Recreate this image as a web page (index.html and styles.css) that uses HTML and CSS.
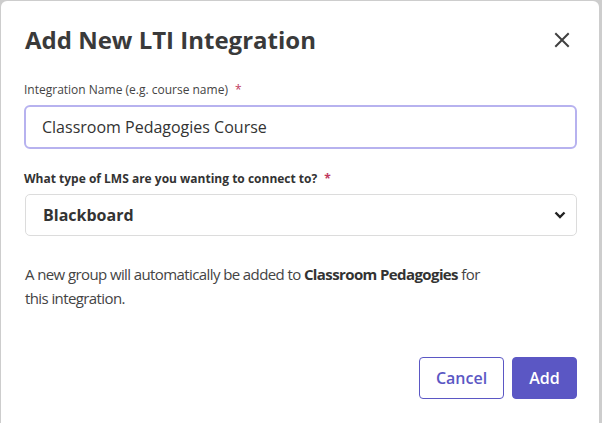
FILE: index.html
```html
<!DOCTYPE html>
<html lang="en">
<head>
<meta charset="utf-8">
<title>Add New LTI Integration</title>
<link rel="stylesheet" href="styles.css">
</head>
<body>
<div class="modal" role="dialog" aria-labelledby="modal-title">
  <header class="modal-header">
    <h1 id="modal-title" class="modal-title">Add New LTI Integration</h1>
    <button class="close-btn" aria-label="Close">
      <svg width="16" height="16" viewBox="0 0 16 16" aria-hidden="true"><path d="M2 2 L14 14 M14 2 L2 14" stroke="#404040" stroke-width="2" stroke-linecap="square" fill="none"/></svg>
    </button>
  </header>
  <div class="modal-body">
    <div class="field">
      <label class="label" for="name">Integration Name (e.g. course name) <span class="req">*</span></label>
      <input id="name" class="text-input" type="text" value="Classroom Pedagogies Course">
    </div>
    <div class="field field-lms">
      <label class="label label-bold" for="lms">What type of LMS are you wanting to connect to? <span class="req">*</span></label>
      <div class="select">
        <span class="select-value">Blackboard</span>
        <svg class="chevron" width="12" height="8" viewBox="0 0 12 8" aria-hidden="true"><path d="M1.5 1.5 L6 6 L10.5 1.5" stroke="#222" stroke-width="2.4" fill="none"/></svg>
      </div>
    </div>
    <p class="note">A new group will automatically be added to <strong>Classroom Pedagogies</strong> for this integration.</p>
  </div>
  <footer class="modal-footer">
    <button class="btn btn-outline">Cancel</button>
    <button class="btn btn-primary">Add</button>
  </footer>
</div>
</body>
</html>
```

FILE: styles.css
```css
html, body {
  margin: 0;
  padding: 0;
  height: 100%;
  overflow: hidden;
}
body {
  background: #cdcdcd;
  font-family: "Open Sans", "Noto Sans", sans-serif;
  color: #333;
}
.modal {
  margin: 1px 3px 0 1px;
  background: #fff;
  border-radius: 6px 6px 0 0;
  height: 440px;
  box-sizing: border-box;
  padding: 0 22px 0 23px;
}
.modal-header {
  display: flex;
  align-items: center;
  justify-content: space-between;
  padding-top: 23px;
  height: 55px;
  box-sizing: border-box;
}
.modal-title {
  margin: 0 0 0 1px;
  font-size: 24px;
  font-weight: 700;
  line-height: 32px;
  color: #3a3a3a;
}
.close-btn {
  border: 0;
  background: none;
  padding: 0;
  margin-right: 7px;
  width: 16px;
  height: 16px;
  display: flex;
  cursor: pointer;
}
.modal-body {
  padding-top: 26px;
}
.field {
  display: flex;
  flex-direction: column;
}
.label {
  font-size: 12px;
  line-height: 16px;
  color: #444;
  margin-bottom: 7px;
}
.label-bold {
  font-weight: 700;
  color: #333;
}
.req {
  color: #c0395e;
  margin-left: 4px;
}
.text-input {
  height: 44px;
  box-sizing: border-box;
  border: 2px solid #b7b2ef;
  border-radius: 6px;
  padding: 0 16px;
  font-family: inherit;
  font-size: 16px;
  color: #333;
  outline: none;
}
.field-lms {
  margin-top: 22px;
}
.select {
  height: 42px;
  box-sizing: border-box;
  border: 1px solid #dcdcdc;
  border-radius: 5px;
  padding: 0 10px 0 17px;
  display: flex;
  align-items: center;
  justify-content: space-between;
  margin-left: 1px;
}
.select-value {
  font-size: 16px;
  font-weight: 700;
  color: #333;
}
.note {
  margin: 26px 0 0 1px;
  font-size: 15px;
  letter-spacing: -0.6px;
  line-height: 24px;
  color: #444;
  padding-right: 90px;
}
.note strong {
  font-weight: 700;
  color: #333;
}
.modal-footer {
  display: flex;
  justify-content: flex-end;
  gap: 8px;
  margin-top: 47px;
}
.btn {
  height: 42px;
  box-sizing: border-box;
  border-radius: 4px;
  font-family: inherit;
  font-size: 16px;
  font-weight: 600;
  padding: 0;
  cursor: pointer;
}
.btn-outline {
  background: #fff;
  color: #5b57c4;
  border: 1px solid #5b57c4;
  width: 85px;
}
.btn-primary {
  background: #5b57c4;
  color: #fff;
  border: 1px solid #5b57c4;
  width: 65px;
}
```
